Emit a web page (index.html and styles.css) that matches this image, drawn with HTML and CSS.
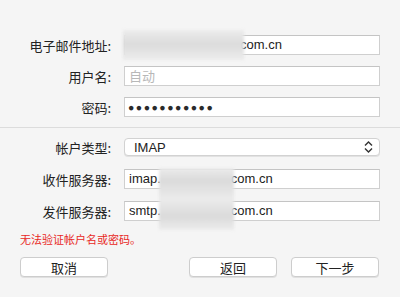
FILE: index.html
```html
<!DOCTYPE html>
<html lang="zh-CN">
<head>
  <meta charset="UTF-8">
  <title>添加帐户</title>
  <link rel="stylesheet" href="styles.css">
</head>
<body>
  <div class="sheet">
    <div class="group top">
      <div class="row">
        <label class="label">电子邮件地址:</label>
        <div class="field"><span class="masked masked-email"></span>com.cn</div>
      </div>
      <div class="row">
        <label class="label">用户名:</label>
        <div class="field placeholder">自动</div>
      </div>
      <div class="row">
        <label class="label">密码:</label>
        <div class="field dots">●●●●●●●●●●●</div>
      </div>
      <div class="blur blur-email"></div>
    </div>

    <div class="group bottom">
      <div class="row row-select">
        <label class="label">帐户类型:</label>
        <div class="select">
          <span>IMAP</span>
          <svg class="chevron" width="9" height="12" viewBox="0 0 9 12">
            <path d="M1 4.5 L4.5 1 L8 4.5 M1 7.5 L4.5 11 L8 7.5" fill="none" stroke="#333" stroke-width="1.4"/>
          </svg>
        </div>
      </div>
      <div class="row">
        <label class="label">收件服务器:</label>
        <div class="field">imap.<span class="masked masked-server"></span>com.cn</div>
      </div>
      <div class="row">
        <label class="label">发件服务器:</label>
        <div class="field">smtp.<span class="masked masked-server"></span>com.cn</div>
      </div>
      <div class="blur blur-server"></div>
    </div>

    <p class="error">无法验证帐户名或密码。</p>

    <div class="actions">
      <button class="btn">取消</button>
      <div class="spacer"></div>
      <button class="btn">返回</button>
      <button class="btn">下一步</button>
    </div>
  </div>
</body>
</html>
```

FILE: styles.css
```css
body {
  margin: 0;
  background: #f5f5f5;
  font-family: "Liberation Sans", "Noto Sans CJK SC", sans-serif;
  font-size: 13px;
  color: #222;
}

.sheet {
  width: 400px;
  height: 297px;
  overflow: hidden;
}

.group {
  position: relative;
  display: flex;
  flex-direction: column;
  gap: 11px;
}

.group.top {
  padding: 35px 0 10px;
  border-bottom: 1px solid #dcdcdc;
}

.group.bottom {
  padding-top: 10px;
  gap: 12px;
}

.row {
  display: flex;
  align-items: center;
  height: 20px;
}

.label {
  width: 111px;
  text-align: right;
  margin-right: 13px;
  font-family: "Noto Sans CJK SC", sans-serif;
  color: #222;
}

.field {
  box-sizing: border-box;
  width: 256px;
  height: 20px;
  padding: 0 4px;
  line-height: 18px;
  background: #fff;
  border: 1px solid #cfcfcf;
  border-top-color: #c4c4c4;
  white-space: nowrap;
  overflow: hidden;
}

.masked {
  display: inline-block;
  height: 1px;
}

.masked-email {
  width: 111px;
}

.masked-server {
  width: 70px;
}

.placeholder {
  color: #b8b8b8;
  font-family: "Noto Sans CJK SC", sans-serif;
}

.dots {
  font-size: 10.5px;
  letter-spacing: 1.5px;
  color: #2a2a2a;
  padding-left: 3px;
}

.row-select {
  height: 18px;
  margin-bottom: 1px;
}

.select {
  box-sizing: border-box;
  width: 256px;
  height: 18px;
  padding: 0 6px 0 9px;
  display: flex;
  align-items: center;
  justify-content: space-between;
  background: #fff;
  border: 1px solid #d2d2d2;
  border-radius: 4px;
  box-shadow: 0 1px 0 #e2e2e2;
}

.blur {
  position: absolute;
  background: linear-gradient(180deg, #ececec 0%, #dcdcdc 45%, #dedede 55%, #ececec 100%);
  filter: blur(1.5px);
}

.blur-email {
  left: 123px;
  top: 30px;
  width: 121px;
  height: 30px;
}

.blur-server {
  left: 159px;
  top: 40px;
  width: 75px;
  height: 62px;
  background: linear-gradient(180deg, #ececec 0%, #dadada 20%, #ebebeb 50%, #dadada 78%, #ececec 100%);
}

.error {
  margin: 10px 0 0 20px;
  height: 16px;
  line-height: 16px;
  color: #e8281f;
  font-family: "Noto Sans CJK SC", sans-serif;
  font-size: 11px;
}

.actions {
  display: flex;
  padding: 0 21px 0 20px;
  margin-top: 10px;
  gap: 14px;
}

.spacer {
  flex: 1;
}

.btn {
  box-sizing: border-box;
  width: 88px;
  height: 20px;
  padding: 0;
  background: #fff;
  border: 1px solid #cdcdcd;
  border-radius: 4px;
  box-shadow: 0 1px 0 #e0e0e0;
  font-family: "Noto Sans CJK SC", sans-serif;
  font-size: 13px;
  color: #222;
}
```
